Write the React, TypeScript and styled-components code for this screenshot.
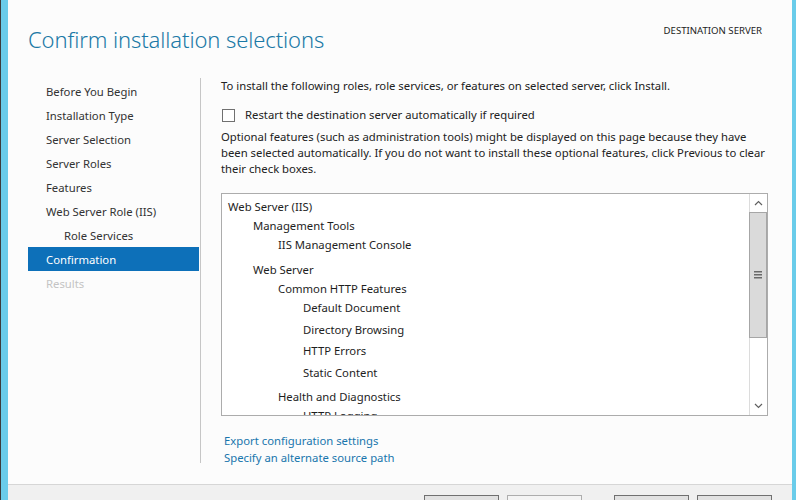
import React from "react";
import styled, { createGlobalStyle } from "styled-components";

const Global = createGlobalStyle`
  html, body { margin: 0; padding: 0; }
  body { font-family: "Noto Sans", "Open Sans", sans-serif; }
`;

const Screen = styled.div`
  width: 796px;
  height: 500px;
  display: flex;
  overflow: hidden;
  background: #fcfcfc;
`;

const LeftEdge = styled.div`
  width: 7px;
  flex: none;
  background: #6accea;
  border-left: 1px solid #3c3c3c;
`;

const RightEdge = styled.div`
  width: 4px;
  flex: none;
  background: #6accea;
`;

const Window = styled.div`
  flex: 1;
  display: flex;
  flex-direction: column;
  min-width: 0;
`;

const Header = styled.div`
  height: 78px;
  flex: none;
  display: flex;
  justify-content: space-between;
  align-items: flex-start;
  padding: 0 30px 0 20px;
  box-sizing: border-box;
`;

const Title = styled.h1`
  margin: 22px 0 0;
  font-weight: 300;
  font-size: 22px;
  line-height: 34px;
  color: #1b79a6;
  letter-spacing: -0.1px;
`;

const DestLabel = styled.div`
  margin-top: 24px;
  font-size: 9.6px;
  color: #222;
`;

const Body = styled.div`
  display: flex;
  height: 385px;
  flex: none;
`;

const Nav = styled.nav`
  width: 172px;
  margin-left: 20px;
  padding-top: 1px;
  flex: none;
  display: flex;
  flex-direction: column;
`;

const NavItem = styled.div<{ $indent?: boolean; $active?: boolean; $disabled?: boolean }>`
  height: 24px;
  line-height: 25px;
  padding-left: ${(p) => (p.$indent ? 36 : 18)}px;
  font-size: 11.3px;
  color: ${(p) => (p.$active ? "#ffffff" : p.$disabled ? "#c4c4c4" : "#333333")};
  background: ${(p) => (p.$active ? "#0d70b9" : "transparent")};
  margin-right: 1px;
`;

const Separator = styled.div`
  width: 1px;
  background: #c6c6c6;
  flex: none;
`;

const Content = styled.div`
  margin-left: 20px;
  width: 547px;
  display: flex;
  flex-direction: column;
  font-size: 11.3px;
  color: #222;
`;

const Line = styled.div`
  line-height: 16px;
`;

const CheckRow = styled.label`
  display: flex;
  align-items: center;
  gap: 10px;
  margin-top: 13px;
  line-height: 16px;
`;

const Box = styled.span`
  width: 11px;
  height: 11px;
  border: 1px solid #707070;
  background: #fff;
  margin-left: 1px;
`;

const Para = styled.div`
  margin-top: 6px;
  line-height: 16px;
`;

const ListBox = styled.div`
  margin-top: 16px;
  height: 223px;
  flex: none;
  border: 1px solid #acacac;
  background: #fff;
  display: flex;
  box-sizing: border-box;
  overflow: hidden;
`;

const ListInner = styled.div`
  flex: 1;
  padding: 3px 0 0 6px;
  overflow: hidden;
`;

const Row = styled.div<{ $level: number; $gap?: number }>`
  padding-left: ${(p) => p.$level * 25}px;
  margin-top: ${(p) => p.$gap ?? 0}px;
  height: ${(p) => (p.$level === 3 ? 21.5 : 19)}px;
  line-height: 19px;
  font-size: 11.3px;
  color: #1e1e1e;
  white-space: nowrap;
`;

const ScrollBar = styled.div`
  width: 17px;
  flex: none;
  border-left: 1px solid #dcdcdc;
  display: flex;
  flex-direction: column;
  background: #fff;
`;

const Arrow = styled.div`
  height: 18px;
  flex: none;
  display: flex;
  align-items: center;
  justify-content: center;
`;

const Thumb = styled.div`
  height: 124px;
  flex: none;
  background: #dadada;
  border: 1px solid #a6a6a6;
  margin: 0 0 0 -1px;
  display: flex;
  align-items: center;
  justify-content: center;
`;

const Track = styled.div`
  flex: 1;
`;

const Links = styled.div`
  margin-top: 16px;
  display: flex;
  flex-direction: column;
  padding-left: 3px;
`;

const Link = styled.a`
  color: #1976ad;
  font-size: 11.3px;
  line-height: 17px;
  text-decoration: none;
`;

const Footer = styled.div`
  margin-top: 21px;
  height: 16px;
  flex: none;
  overflow: hidden;
  border-top: 1px solid #d6d6d6;
  background: #f0f0f0;
  display: flex;
  align-items: flex-start;
  padding: 10px 0 0 416px;
  box-sizing: content-box;
  gap: 8px;
`;

const Btn = styled.div<{ $disabled?: boolean; $space?: number }>`
  width: 73px;
  height: 24px;
  border: 1px solid ${(p) => (p.$disabled ? "#adadad" : "#707070")};
  background: ${(p) => (p.$disabled ? "#f4f4f4" : "#e1e1e1")};
  margin-left: ${(p) => p.$space ?? 0}px;
  flex: none;
`;

const ChevronUp = () => (
  <svg width="9" height="6" viewBox="0 0 9 6">
    <path d="M1 5 L4.5 1.5 L8 5" fill="none" stroke="#606060" strokeWidth="1.2" />
  </svg>
);
const ChevronDown = () => (
  <svg width="9" height="6" viewBox="0 0 9 6">
    <path d="M1 1 L4.5 4.5 L8 1" fill="none" stroke="#606060" strokeWidth="1.2" />
  </svg>
);
const Grip = () => (
  <svg width="8" height="8" viewBox="0 0 8 8">
    <rect x="0" y="0" width="8" height="1.5" fill="#6a6a6a" />
    <rect x="0" y="3" width="8" height="1.5" fill="#6a6a6a" />
    <rect x="0" y="6" width="8" height="1.5" fill="#6a6a6a" />
  </svg>
);

const items: { t: string; l: number; g?: number }[] = [
  { t: "Web Server (IIS)", l: 0 },
  { t: "Management Tools", l: 1 },
  { t: "IIS Management Console", l: 2 },
  { t: "Web Server", l: 1, g: 6 },
  { t: "Common HTTP Features", l: 2 },
  { t: "Default Document", l: 3 },
  { t: "Directory Browsing", l: 3 },
  { t: "HTTP Errors", l: 3 },
  { t: "Static Content", l: 3 },
  { t: "Health and Diagnostics", l: 2, g: 3 },
  { t: "HTTP Logging", l: 3 },
];

export default function App() {
  return (
    <>
      <Global />
      <Screen>
        <LeftEdge />
        <Window>
          <Header>
            <Title>Confirm installation selections</Title>
            <DestLabel>DESTINATION SERVER</DestLabel>
          </Header>
          <Body>
            <Nav>
              <NavItem>Before You Begin</NavItem>
              <NavItem>Installation Type</NavItem>
              <NavItem>Server Selection</NavItem>
              <NavItem>Server Roles</NavItem>
              <NavItem>Features</NavItem>
              <NavItem>Web Server Role (IIS)</NavItem>
              <NavItem $indent>Role Services</NavItem>
              <NavItem $active>Confirmation</NavItem>
              <NavItem $disabled>Results</NavItem>
            </Nav>
            <Separator />
            <Content>
              <Line>To install the following roles, role services, or features on selected server, click Install.</Line>
              <CheckRow>
                <Box />
                Restart the destination server automatically if required
              </CheckRow>
              <Para>
                Optional features (such as administration tools) might be displayed on this page because they have
                been selected automatically. If you do not want to install these optional features, click Previous to clear
                their check boxes.
              </Para>
              <ListBox>
                <ListInner>
                  {items.map((it) => (
                    <Row key={it.t} $level={it.l} $gap={it.g}>
                      {it.t}
                    </Row>
                  ))}
                </ListInner>
                <ScrollBar>
                  <Arrow>
                    <ChevronUp />
                  </Arrow>
                  <Thumb>
                    <Grip />
                  </Thumb>
                  <Track />
                  <Arrow>
                    <ChevronDown />
                  </Arrow>
                </ScrollBar>
              </ListBox>
              <Links>
                <Link>Export configuration settings</Link>
                <Link>Specify an alternate source path</Link>
              </Links>
            </Content>
          </Body>
          <Footer>
            <Btn />
            <Btn $disabled />
            <Btn $space={24} />
            <Btn />
          </Footer>
        </Window>
        <RightEdge />
      </Screen>
    </>
  );
}
